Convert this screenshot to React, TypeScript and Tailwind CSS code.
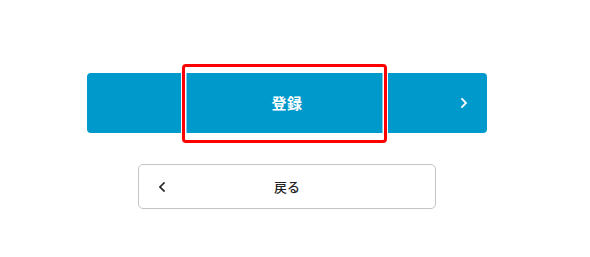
import React from "react";

const ChevronRight = ({ className }: { className?: string }) => (
  <svg className={className} viewBox="0 0 6 10" fill="none">
    <path d="M1 1l4 4-4 4" stroke="currentColor" strokeWidth="1.8" strokeLinecap="square" />
  </svg>
);

const ChevronLeft = ({ className }: { className?: string }) => (
  <svg className={className} viewBox="0 0 6 10" fill="none">
    <path d="M5 1L1 5l4 4" stroke="currentColor" strokeWidth="1.6" strokeLinecap="square" />
  </svg>
);

const App: React.FC = () => {
  return (
    <div
      className="w-[590px] h-[257px] bg-white"
      style={{ fontFamily: '"Noto Sans CJK JP", "Noto Sans", sans-serif' }}
    >
      <div className="ml-[87px] w-[400px] pt-[73px] flex flex-col items-center">
        {/* 登録ボタン */}
        <div className="relative w-full">
          <button
            type="button"
            className="w-full h-[60px] rounded-[4px] bg-[#0099cb] text-white flex items-center justify-center relative"
          >
            <span className="text-[15px] font-bold tracking-[0.5px]">登録</span>
            <ChevronRight className="absolute right-[20px] top-[25px] w-[6px] h-[10px]" />
          </button>
          {/* 注釈の赤枠 */}
          <div className="absolute left-[95px] top-[-9px] w-[205px] h-[79px] rounded-[4px] border-[3px] border-[#ff0000] shadow-[0_0_0_1px_#ffffff,inset_0_0_0_1.5px_#ffffff] pointer-events-none" />
        </div>

        {/* 戻るボタン */}
        <button
          type="button"
          className="mt-[31px] w-[298px] h-[45px] rounded-[5px] border border-[#c4c4c4] bg-white text-[#222] flex items-center justify-center relative"
        >
          <ChevronLeft className="absolute left-[20px] top-[17px] w-[6px] h-[10px]" />
          <span className="text-[13px] font-medium">戻る</span>
        </button>
      </div>
    </div>
  );
};

export default App;
